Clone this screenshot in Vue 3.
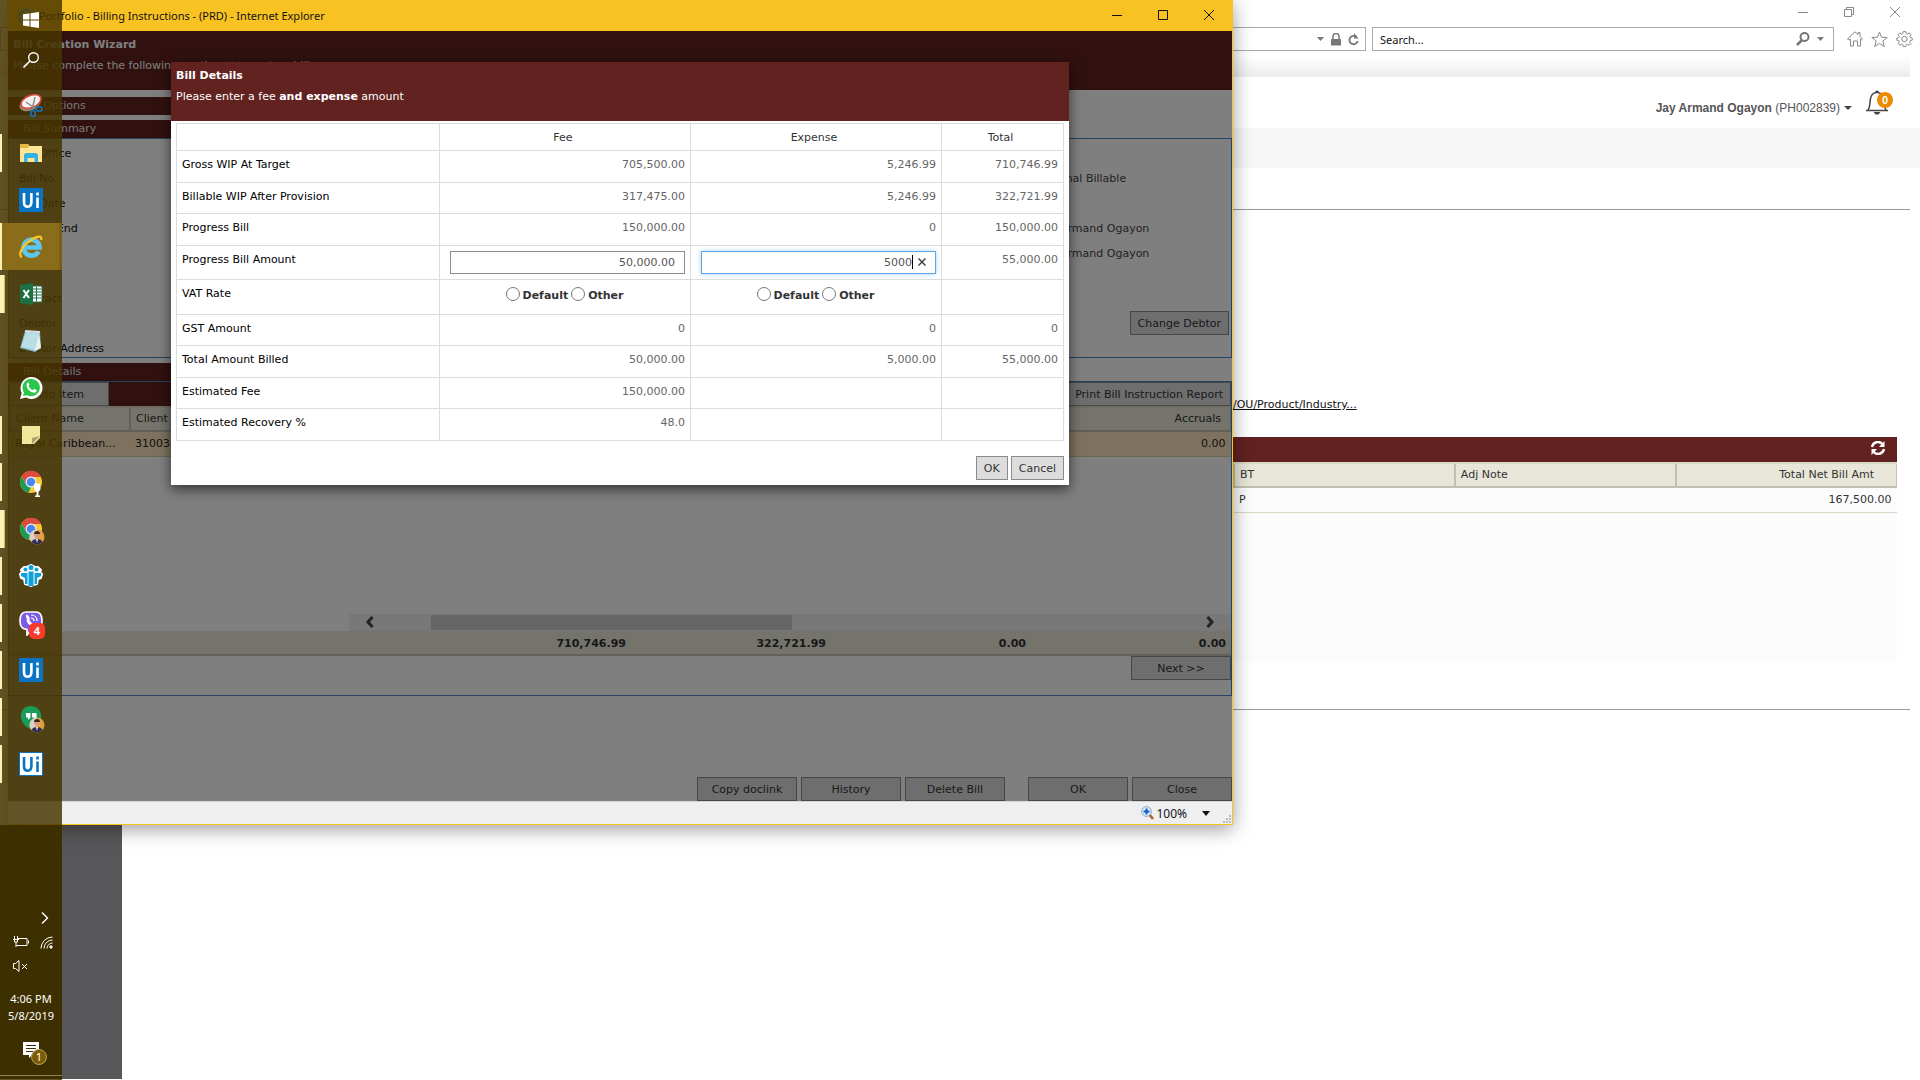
<script setup>
import { ref } from 'vue'

const feeAmount = ref('50,000.00')
const expenseAmount = ref('5000')
const search = ref('')

const topRows = [
  { label: 'Gross WIP At Target', fee: '705,500.00', expense: '5,246.99', total: '710,746.99' },
  { label: 'Billable WIP After Provision', fee: '317,475.00', expense: '5,246.99', total: '322,721.99' },
  { label: 'Progress Bill', fee: '150,000.00', expense: '0', total: '150,000.00' },
]
const bottomRows = [
  { label: 'GST Amount', fee: '0', expense: '0', total: '0' },
  { label: 'Total Amount Billed', fee: '50,000.00', expense: '5,000.00', total: '55,000.00' },
  { label: 'Estimated Fee', fee: '150,000.00', expense: '', total: '' },
  { label: 'Estimated Recovery %', fee: '48.0', expense: '', total: '' },
]
const tasks = [
  { icon: 'snip', name: 'Snipping Tool', state: '' },
  { icon: 'folder', name: 'File Explorer', state: 'open' },
  { icon: 'ui', name: 'UiPath', state: '' },
  { icon: 'ie', name: 'Internet Explorer', state: 'active' },
  { icon: 'excel', name: 'Excel', state: 'multi' },
  { icon: 'notepad', name: 'Notepad', state: '' },
  { icon: 'whatsapp', name: 'WhatsApp', state: '' },
  { icon: 'sticky', name: 'Sticky Notes', state: 'open' },
  { icon: 'chrome', name: 'Chrome', state: 'open', mark: 'lamp' },
  { icon: 'chrome', name: 'Chrome profile', state: 'multi', mark: 'face' },
  { icon: 'team', name: 'Team', state: 'open' },
  { icon: 'viber', name: 'Viber', state: 'open', count: 4 },
  { icon: 'ui', name: 'UiPath Studio', state: 'open' },
  { icon: 'hangouts', name: 'Hangouts', state: 'open', mark: 'face' },
  { icon: 'uilight', name: 'UiPath Robot', state: 'open' },
]
</script>

<template>
  <div class="desktop">
    <!-- Browser window at the back -->
    <section class="back">
      <div class="caption">
        <button aria-label="Minimize"><svg width="10" height="10"><path d="M0 5.500h10" /></svg></button>
        <button aria-label="Restore"><svg width="10" height="10"><path d="M.5 2.500h7v7h-7zM2.500 2.500v-2h7v7h-2" /></svg></button>
        <button aria-label="Close"><svg width="10" height="10"><path d="M0 0l10 10M10 0L0 10" /></svg></button>
      </div>
      <div class="navbar">
        <div class="address">
          <svg width="7" height="4"><path d="M0 0h7L3.500 4z" fill="#777" /></svg>
          <svg width="10" height="13"><path d="M0 6h10v6.500H0z" fill="#777" /><path d="M2 6V3.500a3 3 0 0 1 6 0V6" fill="none" stroke="#777" stroke-width="1.500" /></svg>
          <svg width="11" height="13"><path d="M8.500 4A4.200 4.200 0 1 0 9.700 8" fill="none" stroke="#777" stroke-width="1.800" /><path d="M6 0v5.500h4.500z" fill="#777" /></svg>
        </div>
        <div class="search">
          <input v-model="search" type="text" placeholder="Search..." aria-label="Search" />
          <svg width="14" height="14"><circle cx="8.500" cy="5" r="4" fill="none" stroke="#777" stroke-width="2" /><path d="M6 8L1 13" stroke="#777" stroke-width="2.500" /></svg>
          <svg width="7" height="4"><path d="M0 0h7L3.500 4z" fill="#777" /></svg>
        </div>
        <div class="tools">
          <svg width="16" height="16" class="thin"><path d="M.5 8L8 .8l3 2.700V1.500h2V5.500l2.500 2.500-1 .8-1-.8v7h-3v-5h-4v5h-3V8l-1 .8z" /></svg>
          <svg width="17" height="16" class="thin"><path d="M8.500 1l2 5.200 5.700.3-4.400 3.500 1.500 5.500-4.800-3.100-4.800 3.100 1.500-5.500L.8 6.500l5.700-.3z" /></svg>
          <svg width="17" height="16" class="thin"><circle cx="8.500" cy="8" r="2.700" /><path d="M7.200 .6h2.600l.4 2 1.200.5 1.700-1.200 1.800 1.800-1.200 1.700.5 1.200 2 .4v2.200l-2 .4-.5 1.200 1.200 1.700-1.800 1.800-1.700-1.200-1.200.5-.4 1.900H7.200l-.4-1.900-1.200-.5-1.700 1.200-1.800-1.800 1.200-1.700-.5-1.200-2-.4V7l2-.4.5-1.200L2.100 3.700l1.800-1.800 1.700 1.200 1.200-.5z" /></svg>
        </div>
      </div>
      <div class="tabshade"></div>
      <header class="userbar">
        <button class="user"><b>Jay Armand Ogayon</b> (PH002839)<svg width="8" height="4"><path d="M0 0h8L4 4z" fill="#444" /></svg></button>
        <div class="bell">
          <svg width="24" height="26"><path d="M1 20.500h22M2.500 20.500c3-3 2-7 3-12 .8-4 3.500-6 6.500-6s5.700 2 6.500 6c1 5 0 9 3 12" fill="none" stroke="#444" stroke-width="1.500" /><path d="M10 2.500a2 2 0 0 1 4 0zM8.500 22h7l-2 2.500h-3z" fill="#444" /></svg>
          <span class="count">0</span>
        </div>
      </header>
      <div class="strip"></div>
      <div class="rule"></div>
      <main class="page">
        <a class="path" href="#">/OU/Product/Industry...</a>
        <div class="panel">
          <div class="paneltop">
            <svg width="14" height="14"><path d="M1 6A6 6 0 0 1 11.500 3.200M13 8A6 6 0 0 1 2.500 10.800" fill="none" stroke="#fff" stroke-width="2.400" /><path d="M13.500 0v6H8zM.5 14V8H6z" fill="#fff" /></svg>
          </div>
          <table class="bills">
            <thead><tr><th>BT</th><th>Adj Note</th><th class="num">Total Net Bill Amt</th></tr></thead>
            <tbody><tr><td>P</td><td></td><td class="num">167,500.00</td></tr></tbody>
          </table>
        </div>
      </main>
      <div class="rule"></div>
      <div class="sidebar"></div>
    </section>

    <!-- Billing window in front -->
    <section class="window">
      <div class="titlebar">
        <svg width="18" height="18" viewBox="0 0 24 24"><path d="M20 17a9 9 0 1 1 1-5H8" fill="none" stroke="#4bb4e6" stroke-width="3.500" /></svg>
        <span class="wtitle">Portfolio - Billing Instructions - (PRD) - Internet Explorer</span>
        <button aria-label="Minimize"><svg width="10" height="10"><path d="M0 5.500h10" /></svg></button>
        <button aria-label="Maximize"><svg width="10" height="10"><path d="M.5 .5h9v9h-9z" /></svg></button>
        <button aria-label="Close"><svg width="10" height="10"><path d="M0 0l10 10M10 0L0 10" /></svg></button>
      </div>

      <div class="client">
        <header class="wizard">
          <h1>Bill Creation Wizard</h1>
          <p>Please complete the following sections to create a bill.</p>
        </header>
        <h2 class="bar first">Bill Options</h2>
        <h2 class="bar">Bill Summary</h2>
        <div class="summary">
          <span>Bill Office</span><span></span>
          <span>Bill No.</span><span class="val">Internal Billable</span>
          <span>Bill Date</span><span></span>
          <span>Period End</span><span class="val">Jay Armand Ogayon</span>
          <span></span><span class="val">Jay Armand Ogayon</span>
          <span></span><span></span>
          <span>Contact</span><span></span>
          <span>Debtor</span><span class="right"><button class="btn">Change Debtor</button></span>
          <span>Debtor Address</span><span></span>
        </div>
        <h2 class="bar details">Bill Details</h2>
        <div class="items">
          <div class="itembar">
            <button class="btn wide">Add Item</button>
            <button class="btn">Print Bill Instruction Report</button>
          </div>
          <table class="grid">
            <thead><tr><th>Client Name</th><th>Client</th><th class="num">Accruals</th></tr></thead>
            <tbody><tr><td>Royal Caribbean...</td><td>310038</td><td class="num">0.00</td></tr></tbody>
          </table>
          <div class="scroll">
            <svg width="10" height="12"><path d="M7.500 1L3 6l4.500 5" /></svg>
            <div class="track"><div class="thumb"></div></div>
            <svg width="10" height="12"><path d="M2.500 1L7 6l-4.500 5" /></svg>
          </div>
          <div class="totals"><span>710,746.99</span><span>322,721.99</span><span>0.00</span><span>0.00</span></div>
          <div class="next"><button class="btn wide">Next &gt;&gt;</button></div>
        </div>
        <footer class="actions">
          <button class="btn wide">Copy doclink</button>
          <button class="btn wide">History</button>
          <button class="btn wide">Delete Bill</button>
          <button class="btn wide apart">OK</button>
          <button class="btn wide">Close</button>
        </footer>

        <div class="overlay">
          <div class="modal" role="dialog" aria-label="Bill Details">
            <header class="modalhead">
              <h2>Bill Details</h2>
              <p>Please enter a fee <b>and expense</b> amount</p>
            </header>
            <div class="modalbody">
              <table class="amounts">
                <thead><tr><th></th><th>Fee</th><th>Expense</th><th>Total</th></tr></thead>
                <tbody>
                  <tr v-for="r in topRows" :key="r.label">
                    <th scope="row">{{ r.label }}</th><td>{{ r.fee }}</td><td>{{ r.expense }}</td><td>{{ r.total }}</td>
                  </tr>
                  <tr class="tall">
                    <th scope="row">Progress Bill Amount</th>
                    <td class="entry"><input v-model="feeAmount" class="amount" type="text" aria-label="Fee amount" /></td>
                    <td class="entry">
                      <div class="amount focused">
                        <input v-model="expenseAmount" type="text" aria-label="Expense amount" />
                        <i class="caret"></i>
                        <button class="clear" aria-label="Clear"><svg width="8" height="8"><path d="M.5 .5l7 7M7.500 .5l-7 7" stroke="#444" stroke-width="1.500" /></svg></button>
                      </div>
                    </td>
                    <td>55,000.00</td>
                  </tr>
                  <tr class="tall">
                    <th scope="row">VAT Rate</th>
                    <td v-for="k in ['fee', 'expense']" :key="k">
                      <div class="radios">
                        <input :id="k + '-default'" type="radio" :name="k" /><label :for="k + '-default'">Default</label>
                        <input :id="k + '-other'" type="radio" :name="k" /><label :for="k + '-other'">Other</label>
                      </div>
                    </td>
                    <td></td>
                  </tr>
                  <tr v-for="r in bottomRows" :key="r.label">
                    <th scope="row">{{ r.label }}</th><td>{{ r.fee }}</td><td>{{ r.expense }}</td><td>{{ r.total }}</td>
                  </tr>
                </tbody>
              </table>
              <div class="confirm"><button class="btn">OK</button><button class="btn">Cancel</button></div>
            </div>
          </div>
        </div>
      </div>

      <footer class="status">
        <svg width="13" height="14"><path d="M8 8l4 5" stroke="#a5603a" stroke-width="2.500" /><circle cx="5.500" cy="5.500" r="4.800" fill="#e4f1fb" stroke="#7fa3c4" /><path d="M5.500 2.500v6M2.500 5.500h6" stroke="#0a5fc4" stroke-width="2" /></svg>
        <span>100%</span>
        <svg class="drop" width="8" height="5"><path d="M0 0h8L4 5z" fill="#111" /></svg>
        <svg class="grip" width="9" height="9" fill="#bbb"><path d="M6 0h2v2H6zM3 3h2v2H3zM6 3h2v2H6zM0 6h2v2H0zM3 6h2v2H3zM6 6h2v2H6z" /></svg>
      </footer>
    </section>

    <!-- Taskbar -->
    <nav class="taskbar">
      <button class="sys" aria-label="Start"><svg width="16" height="16" fill="#fff"><path d="M0 2.300L6.500 1.400v6H0zM7.500 1.200L16 0v7.400H7.500zM0 8.500h6.500v6L0 13.600zM7.500 8.500H16V16l-8.500-1.200z" /></svg></button>
      <button class="sys" aria-label="Search"><svg width="16" height="16"><circle cx="10.500" cy="5.500" r="4.800" fill="none" stroke="#fff" stroke-width="1.400" /><path d="M7 9L.5 15.500" stroke="#fff" stroke-width="1.600" /></svg></button>
      <div class="tasks">
        <button v-for="t in tasks" :key="t.name" class="task" :class="t.state" :aria-label="t.name">
          <svg width="26" height="26" viewBox="0 0 26 26">
            <template v-if="t.icon === 'snip'">
              <ellipse cx="12" cy="11" rx="11" ry="6.500" transform="rotate(-22 12 11)" fill="#9b8268" />
              <ellipse cx="13" cy="8.500" rx="10.500" ry="6" transform="rotate(-22 13 8.500)" fill="#f4f2f0" stroke="#d94a42" stroke-width="1.600" />
              <path d="M8 9l10 7M17 4l-3 13" stroke="#888" stroke-width="1.400" />
              <ellipse cx="15" cy="20.500" rx="2.200" ry="3" fill="none" stroke="#1673b8" stroke-width="1.600" /><ellipse cx="21" cy="16" rx="3" ry="2.200" fill="none" stroke="#1673b8" stroke-width="1.600" />
            </template>
            <template v-else-if="t.icon === 'folder'">
              <path d="M2 4h8l1.500 2H24v16H2z" fill="#ffe594" /><path d="M2 4h8l1 2-1 2H2z" fill="#e9b740" />
              <path d="M6 22v-7.500L8 13h10l2 1.500V22h-3.500v-4h-7v4z" fill="#35b1ea" />
            </template>
            <template v-else-if="t.icon === 'ui' || t.icon === 'uilight'">
              <rect x="1.500" y="1.500" width="23" height="23" :fill="t.icon === 'ui' ? '#0a74c4' : '#fff'" stroke="#0a74c4" />
              <g :stroke="t.icon === 'ui' ? '#fff' : '#0a74c4'" stroke-width="2.600" fill="none"><path d="M6 6v9c0 3 1.200 4.700 3.700 4.700s3.700-1.700 3.700-4.700V6" /><path d="M19.500 10.500V21M19.500 5.500v3" /></g>
            </template>
            <template v-else-if="t.icon === 'ie'">
              <path d="M20.500 17.500a8 8 0 1 1 1-4H8" fill="none" stroke="#5cc6f5" stroke-width="4.600" />
              <path d="M4 23C-1 21 5 11 13 6c6-4 12-5 10 0" fill="none" stroke="#f7c52c" stroke-width="2.200" />
            </template>
            <template v-else-if="t.icon === 'excel'">
              <rect x="13" y="5" width="11" height="16" fill="#fff" stroke="#1d7044" /><path d="M14 8h9M14 11h9M14 14h9M14 17h9M18.500 6v14" stroke="#1d7044" />
              <path d="M2 4l13-2v22L2 22z" fill="#1d7044" /><path d="M5.500 9l5.500 8M11 9l-5.500 8" stroke="#fff" stroke-width="2" />
            </template>
            <template v-else-if="t.icon === 'notepad'">
              <path d="M7 3l15 1 1 16-6 4L2 20z" fill="#7fbac4" /><path d="M8 4l13 1-5 17-13-3z" fill="#b9dfe6" /><path d="M21 5l2 15-7 3z" fill="#e9eeee" /><path d="M7 3l15 1" stroke="#ddd" stroke-width="2" />
            </template>
            <template v-else-if="t.icon === 'whatsapp'">
              <path d="M2 24l1.700-6A11 11 0 1 1 8 22.500z" fill="#fff" /><path d="M5 21l1-3.500a8.700 8.700 0 1 1 3 2.700z" fill="#2cc64f" />
              <path d="M9 8c1-1 2 0 2.500 1.500L10.500 11c1 2 2.500 3.300 4.300 4.200l1.400-1.400 2.500 1.400c0 2-2 2.800-3.700 2.300C11 16.500 7.500 13 9 8z" fill="#fff" />
            </template>
            <path v-else-if="t.icon === 'sticky'" d="M4 4h18v12l-6 6H4z" fill="#f3e79b" />
            <template v-else-if="t.icon === 'chrome'">
              <circle cx="13" cy="13" r="11" fill="#f7c936" /><path d="M3.500 7.500A11 11 0 0 1 23 8H13l-4 8z" fill="#dd4b3e" /><path d="M3.500 7.500L8.500 16l4.500 2-2.500 5.700A11 11 0 0 1 3.500 7.500z" fill="#1a9c58" />
              <circle cx="13" cy="13" r="5.500" fill="#e8eefc" /><circle cx="13" cy="13" r="4.300" fill="#4b86f0" />
            </template>
            <template v-else-if="t.icon === 'team'">
              <path d="M6 4h3l4-2 4 2h3l3 3-1 2 2 2-1 4-3 1-1 5-4 1-2 1-2-1-4-1-1-5-3-1-1-4 2-2-1-2z" fill="#fff" stroke="#fff" stroke-width="2" stroke-linejoin="round" />
              <g fill="#0fa0dc"><circle cx="13" cy="4.500" r="2.500" /><circle cx="7.500" cy="6.500" r="2" /><circle cx="18.500" cy="6.500" r="2" /><path d="M10.500 8.500h5V23h-5zM3 10h6.500v11H7v-6l-4-2zM23 10h-6.500v11H19v-6l4-2z" /></g>
            </template>
            <template v-else-if="t.icon === 'viber'">
              <path d="M8 2h10c4 0 6 3 6 9s-2 9-6 9h-5l-4 5v-5.500C4 19 2 17 2 11s2-9 6-9z" fill="#7d5de8" stroke="#fff" stroke-width="1.700" />
              <path d="M8 6c2 0 3 3 2 4.500 1 3 3 4 5 5" fill="none" stroke="#fff" stroke-width="2.800" /><path d="M13 5c4 0 6 3 6 6M13 8c2 0 3 1 3 3" fill="none" stroke="#fff" stroke-width="1.200" />
            </template>
            <template v-else-if="t.icon === 'hangouts'">
              <path d="M13 2a10.300 10.300 0 0 1 0 20.600V25C-1 20 0 2 13 2z" fill="#1a9c58" /><path d="M8 9h4.500v4.500L10 16v-2.500H8zM14 9h4.500v4.500L16 16v-2.500h-2z" fill="#fff" />
            </template>
            <path v-if="t.icon === 'sticky'" d="M22 14l-8 8v-6z" fill="#a8a06c" />
          </svg>
          <svg v-if="t.mark === 'lamp'" class="mark" width="16" height="16"><path d="M5 1.500h6l.5 6-2 2.500v3.500h1.500V15H6v-1.500h1.500V10L5 8z" fill="#fff" /></svg>
          <svg v-if="t.mark === 'face'" class="mark" width="16" height="16"><circle cx="8" cy="8" r="7.500" fill="#e0a040" /><path d="M8 .5a7.500 7.500 0 0 0-5 13L8 8z" fill="#d8d0c8" /><circle cx="8" cy="6" r="2.800" fill="#d99b7c" /><path d="M5 5c0-4 6-4 6 0z" fill="#33231c" /><path d="M2.500 13C4 9 12 9 13.500 13a7.500 7.500 0 0 1-11 0z" fill="#2d2c54" /><path d="M7 10h2l-1 4z" fill="#fff" /></svg>
          <span v-if="t.count" class="mark num4">{{ t.count }}</span>
        </button>
      </div>
      <div class="tray">
        <div class="trayrow end"><svg width="8" height="12"><path d="M1 .5l5.500 5.500L1 11.500" stroke-width="1.400" /></svg></div>
        <div class="trayrow">
          <svg width="16" height="12"><path d="M5 2.500h9v7H3.500M15.500 4.500v3M1.500 0v3M4.500 0v3M0 3.500h6M1.500 4v2h3V4M3 6v5" /></svg>
          <svg width="13" height="13"><path d="M1 12.500A11.500 11.500 0 0 1 12.500 1M4 12.500A8.500 8.500 0 0 1 12.500 4M7 12.500A5.500 5.500 0 0 1 12.500 7" /><circle cx="11" cy="11" r="1.200" fill="#fff" /></svg>
        </div>
        <div class="trayrow"><svg width="16" height="12"><path d="M.5 3.500h2l3.500-3v11l-3.500-3h-2zM9 4l5 5M14 4L9 9" /></svg></div>
        <div class="clock">4:06 PM<br />5/8/2019</div>
        <div class="notes">
          <svg width="16" height="16"><path d="M0 0h16v13H9l-3 3v-3H0z" fill="#fff" /><path d="M3 3.500h10M3 6.500h10M3 9.500h7" stroke="#3f2f01" /></svg>
          <span>1</span>
        </div>
      </div>
    </nav>
  </div>
</template>

<style>
body { margin: 0; overflow: hidden; }
</style>

<style scoped>
* { box-sizing: border-box; }
.desktop { position: relative; height: 100vh; overflow: hidden; background: #fff; font: 11px/16px "DejaVu Sans", Verdana, sans-serif; color: #333; }
button { font: inherit; color: inherit; background: none; border: 0; padding: 0; margin: 0; }
h1, h2, p { margin: 0; font-size: inherit; font-weight: normal; }
table { border-collapse: collapse; table-layout: fixed; width: 100%; }
th { font-weight: normal; text-align: left; }
svg { flex: none; }

/* Back window */
.back { height: 100%; display: flex; flex-direction: column; }
.caption { height: 27px; display: flex; justify-content: flex-end; padding-right: 2px; }
.caption button { width: 46px; height: 27px; }
.caption svg, .thin { fill: none; stroke: #888; }
.navbar { display: flex; height: 24px; padding-right: 7px; }
.address { flex: 1; border: 1px solid #aaa; display: flex; align-items: center; justify-content: flex-end; gap: 7px; padding-right: 6px; }
.search { width: 462px; margin-left: 6px; border: 1px solid #aaa; display: flex; align-items: center; gap: 7px; padding: 0 9px 0 7px; }
.search input { flex: 1; min-width: 0; border: 0; outline: 0; padding: 0; font: 11px "Noto Sans", sans-serif; }
.search input::placeholder { color: #111; opacity: 1; }
.tools { display: flex; align-items: center; gap: 8px; margin-left: 13px; }
.tabshade { height: 26px; margin-right: 10px; background: linear-gradient(#fff 20%, #ececec); }
.userbar { height: 51px; display: flex; align-items: center; justify-content: flex-end; gap: 13px; padding-right: 31px; }
.user { font: 12px "Liberation Sans", Arial, sans-serif; color: #555; padding-top: 10px; }
.user svg { margin: 0 0 2px 4px; }
.bell { position: relative; width: 24px; height: 26px; }
.count { position: absolute; left: 12px; top: 2px; width: 16px; height: 16px; border-radius: 8px; background: #ec8b00; color: #fff; font: bold 11px/16px "Liberation Sans", sans-serif; text-align: center; }
.strip { height: 40px; background: #f7f7f7; margin-bottom: 41px; }
.rule { height: 1px; background: #999; margin-right: 10px; }
.page { height: 499px; margin: 0 23px 0 1233px; padding-top: 187px; }
.path { display: block; color: #111; text-decoration: underline; margin-bottom: 24px; height: 16px; }
.panel { background: #fcfcfc; height: 225px; }
.paneltop { height: 25px; background: #612220; display: flex; align-items: center; justify-content: flex-end; padding: 0 12px 3px 0; }
.bills th, .grid th { height: 24px; background: #e8e6d8; border: 2px solid #c3c0ae; border-top-color: #dcd9c8; border-right-width: 1px; padding: 0 5px; }
.bills td { height: 25px; padding: 1px 5px 0; border-bottom: 1px solid #d9d6c4; }
.bills th.num { padding-right: 22px; }
.num { text-align: right; }
.sidebar { flex: 1; margin-top: 115px; width: 122px; background: #575759; border-left: 62px solid #0d1005; margin-bottom: 1px; }

/* Billing window */
.window { position: absolute; top: 0; left: 7px; right: 687px; background: #fff; border: 1px solid #f8c222; border-top: 0; box-shadow: 0 4px 18px rgba(0, 0, 0, .4); }
.titlebar { height: 31px; display: flex; align-items: center; background: #f8c222; font: 11px "Noto Sans", sans-serif; color: #111; padding-left: 9px; }
.wtitle { flex: 1; margin-left: 4px; }
.titlebar button { width: 46px; height: 31px; }
.titlebar button svg { fill: none; stroke: #111; }
.client { position: relative; height: 770px; display: flex; flex-direction: column; }
.wizard { height: 59px; flex: none; background: #612220; color: #fff; padding: 6px 5px; }
.wizard h1, .modalhead h2 { font-weight: bold; margin-bottom: 5px; }
.bar { width: 60%; height: 18px; flex: none; line-height: 17px; background: #612220; color: #eee; padding-left: 15px; margin-top: 5px; }
.bar.first { margin-top: 7px; }
.bar.details { margin-top: 5px; }
.summary { flex: none; border: 1px solid #4b86bd; height: 220px; display: grid; grid-template-columns: 1fr 191px; grid-template-rows: repeat(5, 25px) 20px 25px 25px 21px; padding: 2px 0 0 10px; line-height: 25px; color: #111; }
.val { color: #444; }
.right { display: flex; justify-content: flex-end; padding-right: 2px; }
.btn { height: 24px; border: 1px solid #8c8c8c; background: #ddd; color: #333; padding: 1px 7px 0; line-height: 21px; }
.wide { width: 100px; }
.items { flex: none; border: 1px solid #4b86bd; }
.itembar { height: 24px; display: flex; justify-content: space-between; background: linear-gradient(90deg, #612220 80%, #fff 80%); }
.grid th:nth-child(1) { width: 120px; }
.grid td { height: 25px; padding: 1px 5px 0; background: #fde4be; border-bottom: 1px solid #d9c8a8; color: #222; }
.grid th.num { padding-right: 9px; }
.scroll { margin: 157px 0 0 340px; height: 17px; background: #f0f0f0; display: flex; align-items: center; padding: 0 16px; }
.scroll svg { fill: none; stroke: #444; stroke-width: 3; }
.track { flex: 1; padding: 0 53px 0 56px; }
.thumb { width: 50%; height: 15px; background: #cdcdcd; }
.totals { height: 25px; background: #e8e6d8; border-bottom: 2px solid #c8c0b4; display: flex; justify-content: flex-end; font-weight: bold; line-height: 25px; padding-right: 5px; }
.totals span { width: 200px; text-align: right; }
.next { display: flex; justify-content: flex-end; height: 39px; }
.actions { display: flex; justify-content: flex-end; gap: 4px; margin-top: auto; }
.apart { margin-left: 19px; }
.overlay { position: absolute; inset: 0; background: rgba(0, 0, 0, .5); display: flex; align-items: flex-start; justify-content: center; padding-top: 31px; }
.modal { flex: 0 1 898px; background: #fff; box-shadow: 0 4px 12px rgba(0, 0, 0, .6); }
.modalhead { height: 59px; background: #612220; color: #fff; padding: 6px 5px; }
.modalbody { padding: 2px 5px 5px; }
.amounts { height: 318px; }
.amounts th, .amounts td { border: 1px solid #dcdcdc; padding: 6px 5px 0; vertical-align: top; height: 31px; color: #000; }
.amounts td { text-align: right; color: #666; }
.amounts thead th { height: 27px; text-align: center; color: #333; padding-right: 9px; }
.amounts thead th:nth-child(1) { width: 263px; }
.amounts thead th:nth-child(4) { width: 122px; }
.amounts .tall > * { height: 34px; }
.amounts .entry { padding-top: 5px; }
.amount { display: block; width: 235px; height: 23px; margin-left: auto; border: 1px solid #8c8c8c; background: #fff; color: #555; font: inherit; text-align: right; padding: 0 9px; }
.focused { display: flex; align-items: center; border-color: #5ea5e6; box-shadow: 0 0 5px #a8d0f4; }
.focused input { flex: 1; min-width: 0; border: 0; outline: 0; padding: 1px 0 0; font: inherit; color: #555; text-align: right; background: none; }
.caret { width: 1px; height: 14px; background: #000; margin-right: 5px; }
.clear { width: 8px; height: 16px; line-height: 8px; }
.radios { display: flex; align-items: flex-start; justify-content: center; font-weight: bold; color: #333; line-height: 20px; padding-right: 4px; }
.radios input { width: 14px; height: 14px; margin: 1px 3px 0; appearance: none; border: 1px solid #777; border-radius: 7px; background: #fff; }
.confirm { display: flex; justify-content: flex-end; gap: 3px; margin-top: 15px; }
.status { height: 23px; display: flex; align-items: center; justify-content: flex-end; gap: 2px; background: #efefef; border-top: 1px solid #d5d5d5; font: 12px "Noto Sans", sans-serif; color: #112; }
.status .drop { margin-left: 13px; }
.grip { align-self: flex-end; margin-left: 11px; }

/* Taskbar */
.taskbar { position: absolute; inset: 0 auto 0 0; width: 62px; background: rgba(72, 54, 0, .84); display: flex; flex-direction: column; color: #fff; }
.sys { height: 40px; }
.sys svg { display: block; margin: 0 auto; }
.tasks { margin-top: 2px; display: flex; flex-direction: column; }
.task { position: relative; height: 47px; display: flex; align-items: center; justify-content: center; }
.open::before, .multi::before, .active::before { content: ""; position: absolute; left: 0; top: 5px; width: 2px; height: 38px; background: #fff0b4; }
.multi::before { width: 4px; border-right: 1px solid #c5b880; }
.active { background: #8a6d1b; box-shadow: inset -3px 0 #7a5f14; }
.active::before { top: 0; height: 47px; }
.mark { position: absolute; left: 29px; top: 24px; }
.num4 { width: 16px; height: 16px; border-radius: 5px; background: #fb3a2e; font: bold 11px/16px "Noto Sans", sans-serif; text-align: center; }
.tray { margin-top: auto; border-bottom: 1px solid #8f8355; margin-bottom: 4px; }
.tray svg { fill: none; stroke: #fff; }
.trayrow { height: 24px; display: flex; align-items: center; gap: 11px; padding: 0 10px 0 13px; }
.end { justify-content: flex-end; padding-right: 13px; }
.clock { margin-top: 12px; font: 11px/17px "Noto Sans", sans-serif; text-align: center; }
.notes { position: relative; height: 51px; padding: 18px 23px; }
.notes svg { stroke: none; }
.notes span { position: absolute; left: 31px; top: 25px; width: 16px; height: 16px; border-radius: 8px; border: 1px solid #b5a25e; background: #7b5c05; font: 11px/14px "Noto Sans", sans-serif; text-align: center; }
</style>
